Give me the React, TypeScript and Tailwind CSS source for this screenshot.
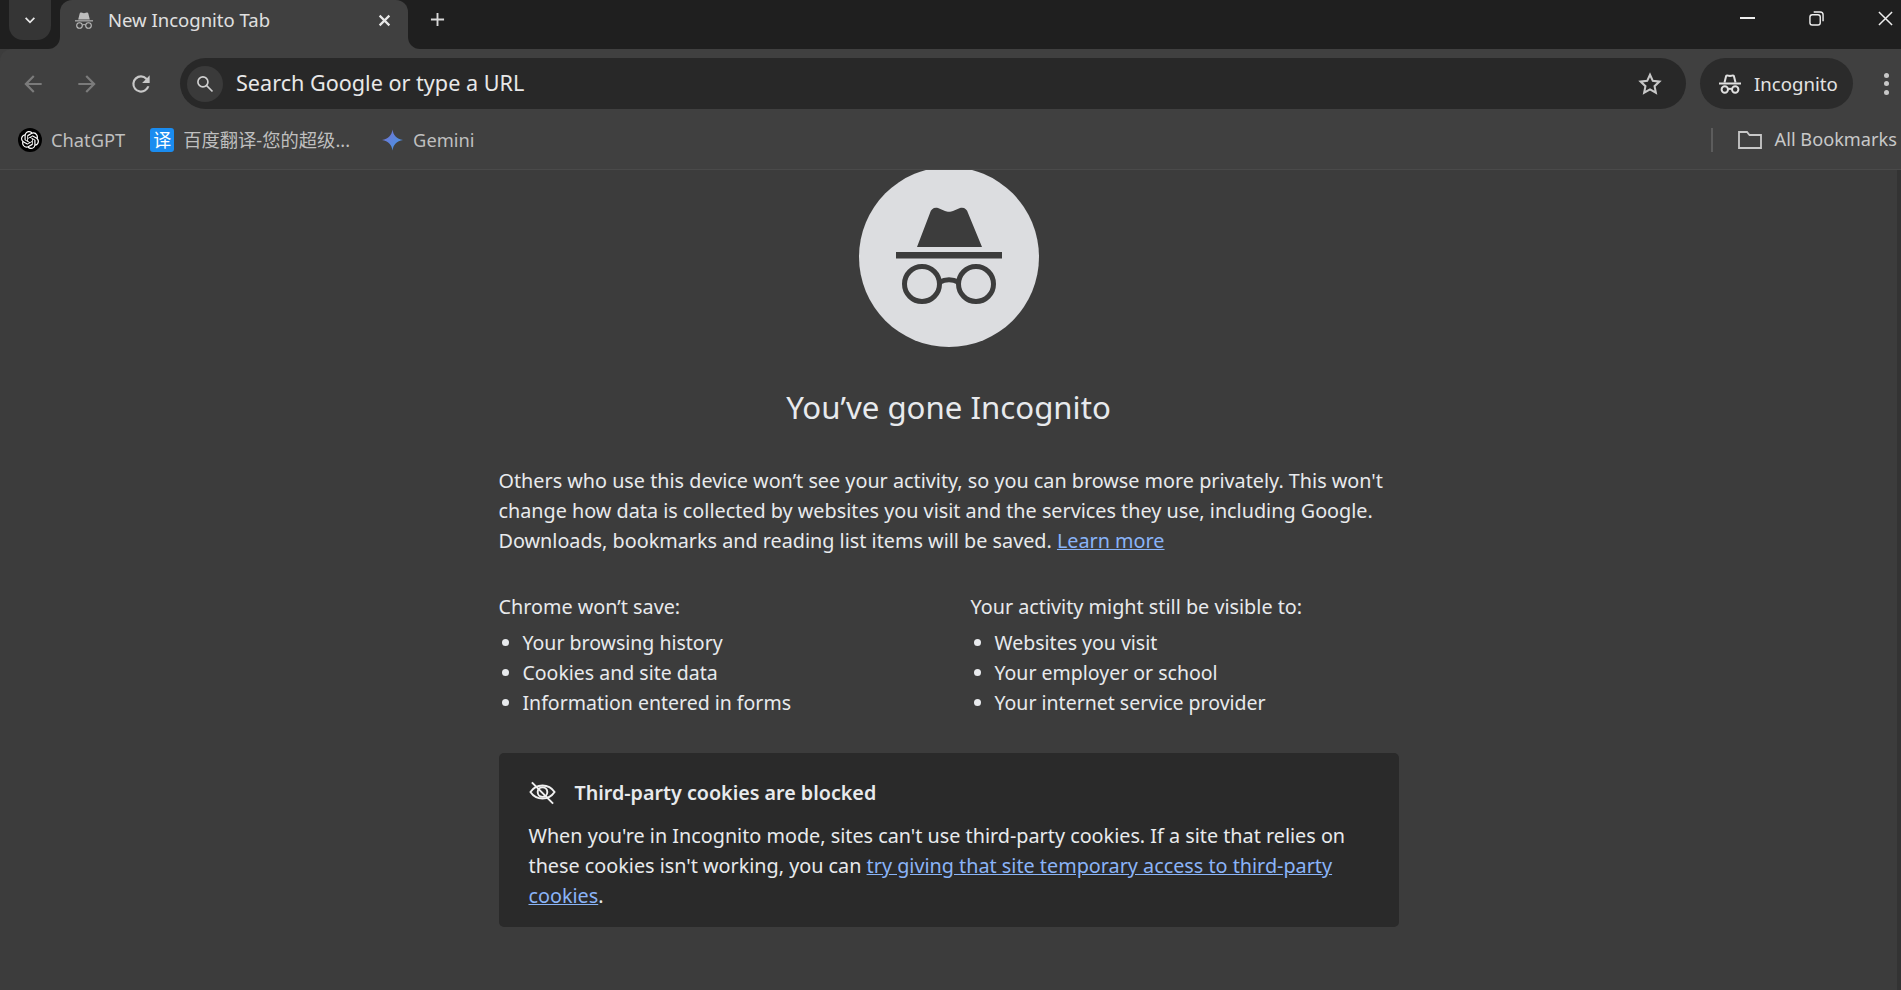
import React from "react";
import { SiOpenai } from "react-icons/si";

const font = "font-['Noto_Sans','Noto_Sans_CJK_SC',sans-serif]";

function TabHat({ className }: { className?: string }) {
  return (
    <svg viewBox="0 0 18 17" className={className} fill="currentColor">
      <path d="M3.200 7.500 4.700 1.500C4.900.7 5.500.4 6.200.6L9 1.200 11.800.6c.7-.2 1.300.1 1.500.9l1.500 6z" />
      <rect x="0" y="8.300" width="18" height="1.100" />
      <circle cx="4.500" cy="13.500" r="2.800" fill="none" stroke="currentColor" strokeWidth="1.100" />
      <circle cx="13.500" cy="13.500" r="2.800" fill="none" stroke="currentColor" strokeWidth="1.100" />
      <path d="M7.300 13c1-.5 2.400-.5 3.400 0" fill="none" stroke="currentColor" strokeWidth="1" />
    </svg>
  );
}

function PillHat({ className }: { className?: string }) {
  return (
    <svg viewBox="0 0 22 20" className={className} fill="none" stroke="currentColor" strokeWidth="2">
      <path d="M5.500 8.500 7 2.500c.2-.8.800-1.200 1.500-1l2.500.500 2.500-.500c.7-.2 1.300.2 1.500 1l1.500 6" />
      <path d="M0 9.500h22" />
      <circle cx="5.800" cy="15.500" r="3.200" />
      <circle cx="16.200" cy="15.500" r="3.200" />
      <path d="M9 15.200c1.200-.6 2.800-.6 4 0" />
    </svg>
  );
}

function App() {
  return (
    <div className={`flex h-screen w-full flex-col overflow-hidden bg-[#3c3c3c] text-[#e3e3e3] ${font}`}>
      <div className="flex h-[49px] shrink-0 items-stretch bg-[#1f1f1f]">
        <div className="ml-[9px] flex h-10 w-[42px] items-center justify-center rounded-b-[14px] bg-[#353535]">
          <svg viewBox="0 0 12 8" className="h-[7px] w-3" fill="none" stroke="#e8e8e8" strokeWidth="2"><path d="M1 1l5 5 5-5" /></svg>
        </div>
        <div className="relative ml-[9px] flex w-[348px] items-center rounded-t-[12px] bg-[#404040] pb-[9px] pl-[15px]">
          <div className="absolute -left-3 bottom-0 h-3 w-3 bg-[#404040]"><div className="h-full w-full rounded-br-[12px] bg-[#1f1f1f]" /></div>
          <div className="absolute -right-3 bottom-0 h-3 w-3 bg-[#404040]"><div className="h-full w-full rounded-bl-[12px] bg-[#1f1f1f]" /></div>
          <TabHat className="h-[17px] w-[18px] text-[#bdbdbd]" />
          <span className="ml-[15px] flex-1 text-[18.500px] text-[#e0e0e0]">New Incognito Tab</span>
          <svg viewBox="0 0 12 12" className="mr-[17px] h-[13px] w-[13px]" fill="none" stroke="#e8e8e8" strokeWidth="2"><path d="M1.500 1.500l9 9M10.500 1.500l-9 9" /></svg>
        </div>
        <div className="ml-[22px] flex items-center pb-[11px]">
          <svg viewBox="0 0 16 16" className="h-[15px] w-[15px]" fill="none" stroke="#d8d8d8" strokeWidth="2"><path d="M8 1v14M1 8h14" /></svg>
        </div>
        <div className="ml-auto flex items-center gap-[54px] pb-[13px] pr-[8px]">
          <div className="h-[2px] w-[15px] bg-[#eeeeee]" />
          <svg viewBox="0 0 16 16" className="h-[15px] w-[15px]" fill="none" stroke="#eeeeee" strokeWidth="1.500"><rect x="1" y="4" width="11" height="11" rx="2.500" /><path d="M5 1h7a3 3 0 0 1 3 3v7" /></svg>
          <svg viewBox="0 0 16 16" className="h-[15px] w-[15px]" fill="none" stroke="#eeeeee" strokeWidth="1.600"><path d="M1 1l14 14M15 1L1 15" /></svg>
        </div>
      </div>
      <div className="flex h-[69px] shrink-0 items-center rounded-tl-[12px] bg-[#404040] pl-[20px]">
        <svg viewBox="0 0 24 24" className="h-[26px] w-[26px]" fill="#7b7b7b"><path d="M20 11H7.800l5.600-5.600L12 4l-8 8 8 8 1.400-1.400L7.800 13H20z" /></svg>
        <svg viewBox="0 0 24 24" className="ml-[28px] h-[26px] w-[26px]" fill="#7b7b7b"><path d="M4 11h12.200l-5.600-5.600L12 4l8 8-8 8-1.400-1.400 5.600-5.600H4z" /></svg>
        <svg viewBox="0 0 24 24" className="ml-[28px] h-[26px] w-[26px]" fill="#c8c8c8"><path d="M17.650 6.350A7.960 7.960 0 0 0 12 4a8 8 0 1 0 7.730 10h-2.080A6 6 0 1 1 12 6c1.660 0 3.140.690 4.220 1.780L13 11h7V4z" /></svg>
        <div className="ml-[26px] flex h-[51px] w-[1506px] items-center rounded-full bg-[#282828] pl-[7px]">
          <div className="flex h-9 w-9 items-center justify-center rounded-full bg-[#3a3a3a]">
            <svg viewBox="0 0 24 24" className="h-5 w-5" fill="none" stroke="#d0d0d0" strokeWidth="2"><circle cx="9.500" cy="9.500" r="6" /><path d="M14 14l7 7" /></svg>
          </div>
          <span className="ml-[13px] flex-1 text-[21.600px] text-[#e8e8e8]">Search Google or type a URL</span>
          <svg viewBox="0 0 24 24" className="mr-[23px] h-[26px] w-[26px]" fill="none" stroke="#c8c8c8" strokeWidth="1.900"><path d="M12 3.500l2.600 5.600 6.100.7-4.500 4.200 1.200 6L12 17l-5.400 3 1.200-6-4.500-4.200 6.100-.7z" /></svg>
        </div>
        <div className="ml-[14px] flex h-[51px] w-[153px] items-center rounded-full bg-[#2b2b2b] pl-[19px]">
          <PillHat className="h-5 w-[22px] text-[#e0e0e0]" />
          <span className="ml-[13px] text-[18.600px] text-[#e3e3e3]">Incognito</span>
        </div>
        <div className="ml-[31px] flex flex-col gap-[3.500px]">
          <div className="h-[5px] w-[5px] rounded-full bg-[#c8c8c8]" />
          <div className="h-[5px] w-[5px] rounded-full bg-[#c8c8c8]" />
          <div className="h-[5px] w-[5px] rounded-full bg-[#c8c8c8]" />
        </div>
      </div>
      <div className="flex h-[52px] shrink-0 items-center border-b border-[#4a4a4a] bg-[#404040] pb-[7px] pl-[18px] text-[18.300px] text-[#bfbfbf]">
        <div className="flex h-6 w-6 items-center justify-center rounded-full bg-black">
          <SiOpenai className="h-[18px] w-[18px] text-white" />
        </div>
        <span className="ml-[9px]">ChatGPT</span>
        <div className="ml-[25px] flex h-6 w-6 items-center justify-center rounded-[3px] bg-[#1a8cf0] text-[18px] leading-none text-white">译</div>
        <span className="ml-[9px]">百度翻译-您的超级...</span>
        <svg viewBox="0 0 24 24" className="ml-[32px] h-[22px] w-[21px]">
          <defs>
            <linearGradient id="gem" x1="0" y1="0" x2="1" y2="1">
              <stop offset="0" stopColor="#7a6fd0" />
              <stop offset="1" stopColor="#3f9ae8" />
            </linearGradient>
          </defs>
          <path d="M12 0c.8 6.500 4.800 11 12 12-7.200 1-11.200 5.500-12 12-.8-6.500-4.800-11-12-12 7.200-1 11.200-5.500 12-12z" fill="url(#gem)" />
        </svg>
        <span className="ml-[10px]">Gemini</span>
        <div className="ml-auto h-6 w-[2px] bg-[#5c5c5c]" />
        <svg viewBox="0 0 24 18" className="ml-[25px] h-[18px] w-6" fill="none" stroke="#c8c8c8" strokeWidth="1.800"><path d="M1 1h8l2.500 3H23v13H1z" /></svg>
        <span className="ml-[13px] mr-[4px] whitespace-nowrap text-[18.200px] text-[#c8c8c8]">All Bookmarks</span>
      </div>
      <div className="flex min-h-0 flex-1">
        <main className="min-w-0 flex-1 overflow-hidden">
          <div className="mx-auto -mt-[3px] flex w-[900px] flex-col">
            <div className="flex h-[180px] w-[180px] items-center justify-center self-center rounded-full bg-[#dcdde0]">
              <svg viewBox="0 0 110 100" className="h-[100px] w-[110px] text-[#3c3c3c]" fill="currentColor">
                <path d="M23 40 36 6c1-4 4-6 8-5l7 3c2 1 6 1 8 0l7-3c4-1 7 1 8 5l14 34z" />
                <rect x="2" y="45" width="106" height="6.500" />
                <circle cx="28" cy="77" r="17.500" fill="none" stroke="currentColor" strokeWidth="5" />
                <circle cx="82" cy="77" r="17.500" fill="none" stroke="currentColor" strokeWidth="5" />
                <path d="M46 75c5-3 13-3 18 0" fill="none" stroke="currentColor" strokeWidth="5" />
              </svg>
            </div>
            <h1 className="mt-[38px] text-center text-[31.200px] font-normal leading-[44px] text-[#e8eaed]">You’ve gone Incognito</h1>
            <p className="mt-[37px] text-[19.800px] leading-[30px] text-[#e8eaed]">
              Others who use this device won’t see your activity, so you can browse more privately. This won't change how data is collected by websites you visit and the services they use, including Google. Downloads, bookmarks and reading list items will be saved. <a className="text-[#8ab4f8] underline">Learn more</a>
            </p>
            <div className="mt-[36px] flex text-[19.800px] leading-[30px] text-[#e8eaed]">
              <div className="w-[472px]">
                <div>Chrome won’t save:</div>
                <ul className="mt-[6px] list-disc pl-[24px] text-[19.500px]">
                  <li>Your browsing history</li>
                  <li>Cookies and site data</li>
                  <li>Information entered in forms</li>
                </ul>
              </div>
              <div>
                <div>Your activity might still be visible to:</div>
                <ul className="mt-[6px] list-disc pl-[24px] text-[19.500px]">
                  <li>Websites you visit</li>
                  <li>Your employer or school</li>
                  <li>Your internet service provider</li>
                </ul>
              </div>
            </div>
            <div className="mt-[35px] rounded-[5px] bg-[#2a2a2a] pb-[16px] pl-[30px] pr-[30px] pt-[25px] text-[19.800px] leading-[30px] text-[#e8eaed]">
              <div className="flex items-center">
                <svg viewBox="0 0 28 24" className="h-6 w-[27px]" fill="none" stroke="#f0f0f0" strokeWidth="2"><path d="M1.500 11c6-9 19-9 25 0-6 9-19 9-25 0z" /><circle cx="14" cy="11" r="5" /><path d="M3 1l22 22" /></svg>
                <span className="ml-[19px] text-[19.700px] font-semibold">Third-party cookies are blocked</span>
              </div>
              <p className="mt-[13px]">
                When you're in Incognito mode, sites can't use third-party cookies. If a site that relies on these cookies isn't working, you can <a className="text-[#8ab4f8] underline">try giving that site temporary access to third-party cookies</a>.
              </p>
            </div>
          </div>
        </main>
        <div className="w-[4px] shrink-0 bg-[#333333]" />
      </div>
    </div>
  );
}

export default App;
